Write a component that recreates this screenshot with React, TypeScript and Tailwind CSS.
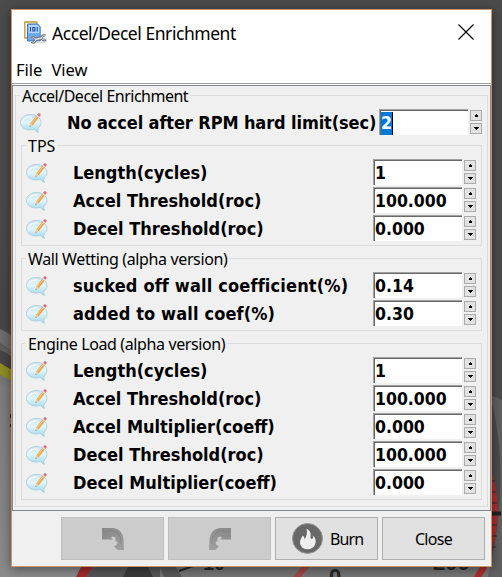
import React from "react";

const bold = "font-['DejaVu_Sans_Condensed','DejaVu_Sans',sans-serif] font-bold [font-stretch:condensed]";
const regular = "font-['Noto_Sans','Open_Sans',sans-serif]";

function NoteIcon() {
  return (
    <svg className="h-[21px] w-[22px] shrink-0" viewBox="0 0 22 21">
      <defs>
        <linearGradient id="bubble" x1="0" y1="0" x2="0" y2="1">
          <stop offset="0" stopColor="#cbe4ee" />
          <stop offset="0.45" stopColor="#e2f5fc" />
          <stop offset="1" stopColor="#9dd7ea" />
        </linearGradient>
      </defs>
      <path d="M10.300 2.500C4.500 2.500.5 5.900.5 10.300c0 4.500 4 7.700 9.500 7.700 1.700 0 3.200-.2 4.500-.7.9 1.600 2.200 2.700 4 3-.8-1.400-.9-2.800-.5-4.300 2-1.300 3-3.400 3-5.500 0-4.600-4.400-8-10.700-8z" fill="url(#bubble)" stroke="#a5cbd9" strokeWidth=".8" />
      <path d="M3 8.500C4.500 5.500 8 4.500 12 5" fill="none" stroke="#fff" strokeWidth="1.200" opacity=".8" />
      <path d="M9.600 14.700l.8-3.500 6.100-7.600 2.300 1.900-6.100 7.700z" fill="#e9a54a" />
      <path d="M11.200 11.900l6-7.500" stroke="#f9cf86" strokeWidth=".9" />
      <path d="M9.600 14.700l.8-3.500 2.300 2z" fill="#efd7b4" />
      <path d="M9.600 14.700l.3-1.300.9.800z" fill="#5b6469" />
      <path d="M16.200 3.900l.9-1.100 2.300 1.900-.9 1.100z" fill="#d5dbde" />
      <path d="M17.100 2.800l1-1.300q1.300-.7 2.200.3.700.9.100 1.700l-.9 1.200z" fill="#dc6d7c" />
    </svg>
  );
}

function Arrow({ up }: { up?: boolean }) {
  return (
    <div className="flex h-[11px] w-3 items-center justify-center border border-[#ababab] bg-[#e2e2e2]">
      <svg className="h-[3px] w-[5px]" viewBox="0 0 5 3" shapeRendering="crispEdges">
        <path d={up ? "M2 0h1v1h1v2H1V1h1z" : "M0 0h5v1H4v1H3v1H2V2H1V1H0z"} fill="#000" />
      </svg>
    </div>
  );
}

function Row({ label, tracking = "tracking-normal", value, selected }: { label: string; tracking?: string; value: string; selected?: boolean }) {
  return (
    <div className="flex h-7 items-center pl-1">
      <NoteIcon />
      <div className={`flex shrink-0 items-center pl-[25px] pt-0.5 ${selected ? "w-[337px]" : "w-[325px]"}`}>
        <span className={`${bold} ${tracking} whitespace-nowrap text-[18px] leading-6 text-black`}>{label}</span>
      </div>
      <div className="flex h-[26px] w-[89px] shrink-0 items-center border-l border-t border-[#a0a0a0] bg-white">
        <div className="flex h-[25px] w-[88px] items-center border-l border-t border-[#696969]">
          <span className={`${bold} text-[17.5px] leading-[23px] ${selected ? "border-r border-black bg-[#0078d7] text-white" : "text-black"}`}>
            {value}
          </span>
        </div>
      </div>
      <div className="ml-0.5 flex flex-col gap-0.5">
        <Arrow up />
        <Arrow />
      </div>
    </div>
  );
}

function Legend({ text, tracking }: { text: string; tracking: string }) {
  return (
    <div className={`${regular} ${tracking} -mt-[10px] mb-1 ml-1 h-[18px] self-start whitespace-nowrap bg-[#f0f0f0] px-0.5 text-[16px] leading-5 text-black`}>
      {text}
    </div>
  );
}

function Group({ title, tracking, children }: { title: string; tracking: string; children: React.ReactNode }) {
  return (
    <div className="ml-[5px] flex w-[461px] flex-col border border-[#dcdcdc] pb-[3px]">
      <Legend text={title} tracking={tracking} />
      {children}
    </div>
  );
}

function UndoArrow() {
  return (
    <svg className="h-[22px] w-[22px]" viewBox="0 0 22 22">
      <defs>
        <linearGradient id="arrow" x1="0" y1="0" x2="1" y2="1">
          <stop offset="0" stopColor="#888" />
          <stop offset=".5" stopColor="#929292" />
          <stop offset="1" stopColor="#a2a2a2" />
        </linearGradient>
      </defs>
      <path d="M0 0h11c6.500.5 10 5.500 10.500 11.500L22 22h-6l-4-3.500c2-1 3.500-2.500 3.500-4.500l-2-1V9.500L10.500 8.500 9 9.500l2 2H0z" fill="url(#arrow)" />
      <path d="M2 2.500L4 4.500C7 2 12 2 15.500 5c3 3 4 7 3.500 11" fill="none" stroke="#7c7c7c" strokeWidth="1" opacity=".6" />
    </svg>
  );
}

function Background() {
  return (
    <svg className="absolute inset-0 h-[577px] w-[502px]" viewBox="0 0 502 577">
      <defs>
        <linearGradient id="left" x1="0" y1="0" x2="0" y2="1">
          <stop offset="0" stopColor="#4a4a4a" />
          <stop offset=".34" stopColor="#464646" />
          <stop offset=".42" stopColor="#686868" />
          <stop offset=".5" stopColor="#7c7c7c" />
          <stop offset="1" stopColor="#8b8b8b" />
        </linearGradient>
      </defs>
      <rect width="502" height="577" fill="#4b4b4b" />
      <rect y="200" width="200" height="377" fill="url(#left)" />
      <path d="M0 329q8 3 14 9v14L0 343z" fill="#6c6c6c" />
      <path d="M0 350q8 3 14 9v16L0 363z" fill="#454545" />
      <path d="M0 363l12 7v11L0 375z" fill="#8e8c22" />
      <path d="M10 414h2v4h-2zM10 424h2v3h-2z" fill="#222" />
      <path d="M81 567h12l-6 10H76z" fill="#a32a2a" />
      <path d="M93 567h92l8 10H86z" fill="#565656" />
      <path d="M128 567h20l5 10h-30z" fill="#3a3a3a" />
      <rect x="160" y="567" width="342" height="10" fill="#757575" />
      <path d="M160 567h16l6 10h-18z" fill="#585858" />
      <path d="M179 571l14-5" stroke="#262626" strokeWidth="2" />
      <path d="M302 566h8l-9 11h-8z" fill="#a04848" />
      <text x="203" y="570" className="font-['Liberation_Sans',sans-serif] text-[20px] font-bold" fill="#262626">10</text>
      <text x="329" y="584" className="font-['Liberation_Sans',sans-serif] text-[22px] font-bold" fill="#262626">0</text>
      <text x="433" y="570" className="font-['Liberation_Sans',sans-serif] text-[22px] font-bold" fill="#262626">200</text>
      <path d="M490 395q22 80-2 182h14V400z" fill="#606060" />
      <path d="M490 468q17 45-4 102l-5 7h-7l6-10h10z" fill="#b02c2c" />
      <path d="M491 481h4M491 492h5M491 503h6M491 525h6M491 536h6M490 547h6" stroke="#292929" strokeWidth="1" />
      <path d="M490 513.500h11" stroke="#222" strokeWidth="4" />
    </svg>
  );
}

export default function App() {
  return (
    <div className="relative h-[577px] w-[502px] overflow-hidden bg-[#4b4b4b]">
      <Background />
      <div className="relative ml-[11px] mt-[9px] flex h-[558px] w-[481px] flex-col border border-[#c8946a] bg-[#f0f0f0] shadow-[0_2px_10px_rgba(0,0,0,0.45)]">
        <div className="flex h-[46px] shrink-0 items-center bg-white pl-3">
          <svg className="h-6 w-6" viewBox="0 0 24 24">
            <path d="M.8 1h12v16H.8z" fill="#fbf4d9" stroke="#c39a35" strokeWidth="1.300" />
            <path d="M3.500 3h10l2.700 2.500V20H3.500z" fill="#72a9ea" stroke="#3b79cb" />
            <path d="M4.500 4h8.500l2.200 2v6H4.500z" fill="#b3d6f9" />
            <path d="M6.500 6v4.500M8.800 6.500h2V10h-2zM13.200 6v4.500" fill="none" stroke="#1d4f9c" strokeWidth="1.100" />
            <path d="M13 20.500h9v2h-12z" fill="#ddd" />
            <path d="M11 18.500l7-1.500" stroke="#6e757d" strokeWidth="3.600" />
            <path d="M7.500 17.300a2.300 2.300 0 1 1 0 3.400M21.300 14.800a2.300 2.300 0 1 0 .5 3.300" fill="none" stroke="#6e757d" strokeWidth="2.600" />
            <path d="M11 18.500l7-1.500" stroke="#e3e6e9" strokeWidth="1.600" />
            <path d="M7.700 17.400a2.200 2.200 0 1 1 0 3.200M21.100 14.900a2.200 2.200 0 1 0 .5 3.100" fill="none" stroke="#d3d8dc" strokeWidth="1" />
          </svg>
          <span className={`${regular} ml-1 w-[406px] whitespace-nowrap text-[17.5px] leading-6 tracking-[-0.45px] text-black`}>Accel/Decel Enrichment</span>
          <svg className="-mt-0.5 h-4 w-4 shrink-0" viewBox="0 0 16 16">
            <path d="M.5.5l15 15M15.500.5l-15 15" stroke="#000" strokeWidth="1.100" />
          </svg>
        </div>
        <div className={`${regular} flex h-[27px] shrink-0 items-center gap-[9px] bg-white pl-1 text-[16.5px] leading-6 text-black`}>
          <span>File</span>
          <span>View</span>
        </div>
        <div className="h-0.5 shrink-0 border-t border-[#a0a0a0] bg-white" />
        <div className="flex h-[426px] shrink-0 flex-col border border-[#828790] pl-0.5 pt-[9px]">
          <div className="flex h-[412px] w-[473px] flex-col border border-[#dcdcdc]">
            <Legend text="Accel/Decel Enrichment" tracking="tracking-[-0.5px]" />
            <Row label="No accel after RPM hard limit(sec)" tracking="tracking-[-0.11px]" value="2" selected />
            <div className="mt-[9px] flex flex-col gap-3">
              <Group title="TPS" tracking="tracking-normal">
                <Row label="Length(cycles)" value="1" />
                <Row label="Accel Threshold(roc)" value="100.000" />
                <Row label="Decel Threshold(roc)" value="0.000" />
              </Group>
              <Group title="Wall Wetting (alpha version)" tracking="tracking-[-0.37px]">
                <Row label="sucked off wall coefficient(%)" tracking="tracking-[0.16px]" value="0.14" />
                <Row label="added to wall coef(%)" tracking="tracking-[0.14px]" value="0.30" />
              </Group>
              <Group title="Engine Load (alpha version)" tracking="tracking-[-0.38px]">
                <Row label="Length(cycles)" value="1" />
                <Row label="Accel Threshold(roc)" value="100.000" />
                <Row label="Accel Multiplier(coeff)" value="0.000" />
                <Row label="Decel Threshold(roc)" value="100.000" />
                <Row label="Decel Multiplier(coeff)" value="0.000" />
              </Group>
            </div>
          </div>
        </div>
        <div className={`${regular} flex justify-end gap-1 pr-[6px] pt-[6px] text-[16px] tracking-[-0.9px] text-black`}>
          <div className="flex h-[43px] w-[103px] items-center justify-center border border-[#bfbfbf] bg-[#cccccc]">
            <UndoArrow />
          </div>
          <div className="flex h-[43px] w-[103px] items-center justify-center border border-[#bfbfbf] bg-[#cccccc]">
            <div className="-scale-x-100">
              <UndoArrow />
            </div>
          </div>
          <div className="flex h-[43px] w-[103px] items-center border border-[#adadad] bg-[#e1e1e1] pl-4">
            <svg className="h-[31px] w-[31px]" viewBox="0 0 31 31">
              <circle cx="15.500" cy="15.500" r="15" fill="#686868" stroke="#999" />
              <path d="M14.500 5.500c4 2.500 4.500 5 4 8-.2 1.500.3 2.500 1.300 2.500 1.200 0 1.500-1.500 1-3.500 3 2.500 3.700 6 2.200 9.300-1.300 3-4.200 4.500-7.500 4.400-4.500-.1-7.500-3.200-7.500-7 0-3 1.700-4.200 2.500-6.700 1.500 1 2 2 1.800 3.800 2.700-2.800 3.200-6.800 2.200-10.800z" fill="#efefef" />
            </svg>
            <span className="ml-[7px]">Burn</span>
          </div>
          <div className="flex h-[43px] w-[103px] items-center justify-center border border-[#adadad] bg-[#e1e1e1] tracking-[-0.7px]">Close</div>
        </div>
      </div>
    </div>
  );
}
